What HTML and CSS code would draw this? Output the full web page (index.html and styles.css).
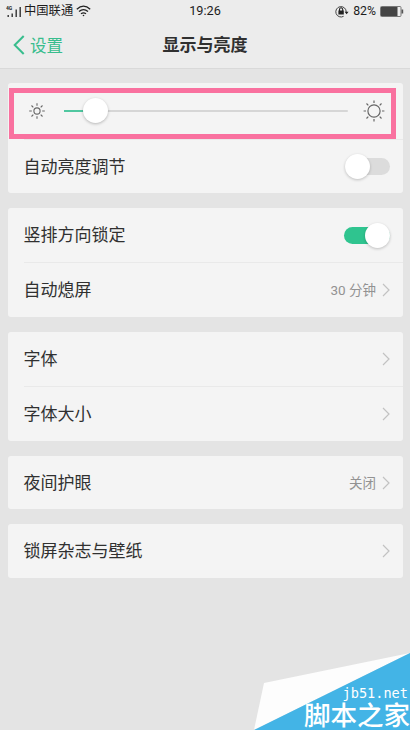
FILE: index.html
```html
<!DOCTYPE html>
<html lang="zh-CN">
<head>
<meta charset="utf-8">
<title>显示与亮度</title>
<link rel="stylesheet" href="styles.css">
</head>
<body>
<div class="phone">
  <header class="top">
    <div class="status">
      <div class="status-left">
        <svg class="signal" width="16" height="13" viewBox="0 0 16 13">
          <text class="net" x="0" y="5.2">4G</text>
          <path d="M2.2 10v2M6.2 8.5V12M10.2 4.5V12M14.2 2V12" fill="none" stroke="#333" stroke-width="1.4"/>
        </svg>
        <span class="carrier">中国联通</span>
        <svg class="wifi" width="15" height="12" viewBox="0 0 15 12" fill="none" stroke="#222" stroke-width="1.3">
          <path d="M.8 4.2Q7.5-2 14.2 4.2M3 6.6Q7.5 2.6 12 6.6M5 8.8Q7.5 6.8 10 8.8"/>
          <circle cx="7.5" cy="10.5" r=".8" fill="#222" stroke="none"/>
        </svg>
      </div>
      <span class="clock">19:26</span>
      <div class="status-right">
        <svg width="14" height="13" viewBox="0 0 14 13">
          <path d="M8.6 11.3A5.2 5.2 0 1 1 11.2 7" fill="none" stroke="#444" stroke-width="1"/>
          <path d="M9.6 6.8h4L11.6 9.3zM3.4 5.6h5.4v4H3.4z" fill="#222"/>
          <path d="M4.5 6V4.4a1.6 1.6 0 0 1 3.2 0V6" fill="none" stroke="#222" stroke-width="1.1"/>
        </svg>
        <span class="percent">82%</span>
        <svg width="24" height="11" viewBox="0 0 24 11">
          <rect x=".5" y=".5" width="20.5" height="10" rx="1" fill="none" stroke="#777"/>
          <rect x="1" y="1" width="16.5" height="9" fill="#444"/>
          <path d="M21.5 3.5h1.7v4h-1.7z" fill="#555"/>
        </svg>
      </div>
    </div>
    <div class="nav">
      <a class="back">
        <svg width="12" height="20" viewBox="0 0 12 20"><path d="M10.7 1L1.7 10l9 9" fill="none" stroke="#38bd8d" stroke-width="2"/></svg>
        <span>设置</span>
      </a>
      <h1>显示与亮度</h1>
    </div>
  </header>

  <main>
    <section class="card card-brightness">
      <div class="row brightness">
        <svg class="sun-small" width="18" height="18" viewBox="-9 -9 18 18" fill="none" stroke="#666" stroke-width="1.1">
          <circle r="3.1"/>
          <path d="M0-5.2V-7.8M0 5.2V7.8M-5.2 0H-7.8M5.2 0H7.8M3.7-3.7L5.5-5.5M3.7 3.7L5.5 5.5M-3.7 3.7L-5.5 5.5M-3.7-3.7L-5.5-5.5"/>
        </svg>
        <div class="slider"><i class="fill"></i><i class="thumb"></i></div>
        <svg class="sun-large" width="24" height="24" viewBox="-12 -12 24 24" fill="none" stroke="#666" stroke-width="1.2">
          <circle r="6.1"/>
          <path d="M0-8V-10.6M0 8V10.6M-8 0H-10.4M8 0H10.4M5.7-5.7L7.5-7.5M5.7 5.7L7.5 7.5M-5.7 5.7L-7.5 7.5M-5.7-5.7L-7.5-7.5"/>
        </svg>
      </div>
      <div class="row"><span class="label">自动亮度调节</span><span class="switch"></span></div>
      <div class="highlight"></div>
    </section>

    <section class="card card-lock">
      <div class="row"><span class="label">竖排方向锁定</span><span class="switch on"></span></div>
      <div class="row"><span class="label">自动熄屏</span><span class="value">30 分钟</span><svg class="chev" width="8" height="14" viewBox="0 0 8 14"><path d="M1 1l6 6-6 6"/></svg></div>
    </section>

    <section class="card card-font">
      <div class="row"><span class="label">字体</span><svg class="chev" width="8" height="14" viewBox="0 0 8 14"><path d="M1 1l6 6-6 6"/></svg></div>
      <div class="row"><span class="label">字体大小</span><svg class="chev" width="8" height="14" viewBox="0 0 8 14"><path d="M1 1l6 6-6 6"/></svg></div>
    </section>

    <section class="card card-night">
      <div class="row"><span class="label">夜间护眼</span><span class="value">关闭</span><svg class="chev" width="8" height="14" viewBox="0 0 8 14"><path d="M1 1l6 6-6 6"/></svg></div>
    </section>

    <section class="card card-wallpaper">
      <div class="row"><span class="label">锁屏杂志与壁纸</span><svg class="chev" width="8" height="14" viewBox="0 0 8 14"><path d="M1 1l6 6-6 6"/></svg></div>
    </section>
  </main>

  <div class="watermark">
    <svg class="corner" width="156" height="77" viewBox="0 0 156 77">
      <path d="M156 0L10 30 0 77z" fill="#fdfdfd"/>
      <path d="M156 0V77H0z" fill="#43b4e6"/>
    </svg>
    <span class="site">jb51.net</span>
    <span class="name">脚本之家</span>
  </div>
</div>
</body>
</html>
```
FILE: styles.css
```css
* { box-sizing: border-box; }

body {
  margin: 0;
  background: #e4e4e4;
  color: #303030;
  font-family: Roboto, "Noto Sans CJK SC", sans-serif;
}

.phone {
  position: relative;
  width: 410px;
  height: 730px;
  overflow: hidden;
}

.top {
  height: 69px;
  background: #ececec;
  border-bottom: 1px solid #d9d9d9;
}

.status {
  display: grid;
  grid-template-columns: 1fr auto 1fr;
  align-items: center;
  height: 22px;
  padding: 0 6px 0 6px;
  color: #1c1c1c;
  font-size: 12.7px;
  line-height: 22px;
}

.status-left,
.status-right { display: flex; align-items: center; }
.status-right { justify-content: flex-end; gap: 4px; }
.net { font: bold 5px Roboto, sans-serif; fill: #222; }
.carrier { margin-left: 2px; font-size: 12.3px; }
.wifi { margin-left: 3px; }
.percent { font-size: 12.3px; }

.nav {
  display: grid;
  grid-template-columns: 1fr auto 1fr;
  align-items: center;
  height: 46px;
  padding: 0 13px;
}

.back {
  display: flex;
  align-items: center;
  gap: 5px;
  color: #38bd8d;
  font-size: 16.5px;
}

h1 {
  margin: 0;
  font-size: 17px;
  font-weight: 700;
  line-height: 24px;
}

main {
  display: flex;
  flex-direction: column;
  gap: 15px;
  padding: 14px 7px 0 8px;
}

.card {
  position: relative;
  display: flex;
  flex-direction: column;
  padding-left: 15.5px;
  border-radius: 3px;
  background: #f4f4f4;
}

.card-brightness { height: 110px; }
.card-lock { height: 109px; }
.card-font { height: 109px; }
.card-night { height: 53px; }
.card-wallpaper { height: 54px; }

.row {
  display: flex;
  flex: 1;
  align-items: center;
  padding-right: 13px;
}

.row + .row { border-top: 1px solid #e9e9e9; }

.label {
  flex: 1;
  font-size: 17px;
  line-height: 24px;
}

.value {
  margin-right: 6px;
  color: #929292;
  font-size: 13.5px;
  line-height: 18px;
}

.chev {
  fill: none;
  stroke: #c2c2c2;
  stroke-width: 1.2;
}

.card .brightness {
  flex: 0 0 56px;
  padding: 0 17.5px 0 4px;
}

.slider {
  position: relative;
  flex: 1;
  height: 2px;
  margin: 0 14px 0 18px;
  border-radius: 1px;
  background: #d6d6d6;
}

.fill {
  display: block;
  width: 32px;
  height: 2px;
  background: #50c7a0;
}

.thumb {
  position: absolute;
  top: -12px;
  left: 19.5px;
  width: 25px;
  height: 25px;
  border-radius: 50%;
  background: #fff;
  box-shadow: 0 1px 3px rgba(0, 0, 0, .25);
}

.switch {
  position: relative;
  width: 45px;
  height: 17px;
  border-radius: 9px;
  background: #dcdcdc;
}

.switch::after {
  content: "";
  position: absolute;
  top: -4px;
  left: 0;
  width: 25px;
  height: 25px;
  border-radius: 50%;
  background: #fff;
  box-shadow: 0 1px 3px rgba(0, 0, 0, .22);
}

.switch.on { width: 46px; background: #2fc48f; }
.switch.on::after { left: 21px; }

.highlight {
  position: absolute;
  top: 5px;
  left: 1px;
  width: 387px;
  height: 51px;
  border: 5px solid #f9719f;
}

.watermark {
  position: absolute;
  right: 0;
  bottom: 0;
  width: 156px;
  height: 77px;
  color: #fff;
}

.corner { display: block; }

.site {
  position: absolute;
  top: 32px;
  right: 2px;
  font: 13.6px/16px "DejaVu Sans Mono", monospace;
}

.name {
  position: absolute;
  right: 0;
  bottom: 0;
  font-size: 26.5px;
  font-weight: 500;
  line-height: 28px;
  white-space: nowrap;
}
```
